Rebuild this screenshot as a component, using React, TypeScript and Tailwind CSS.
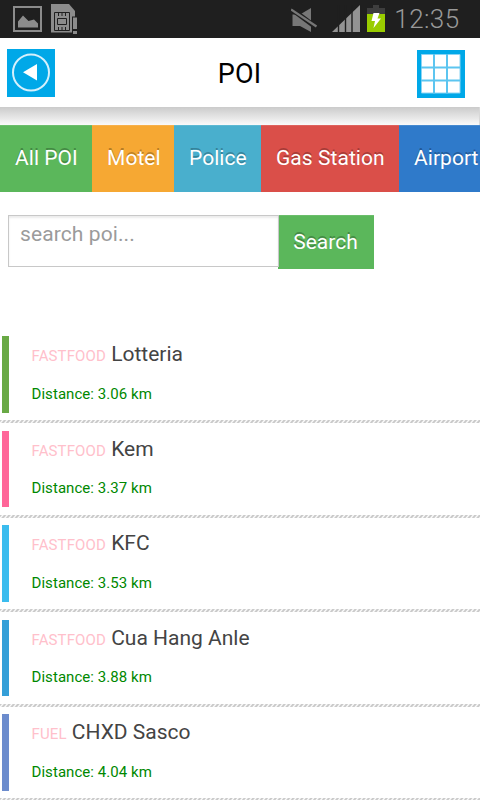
import React, { useState } from 'react'

const categories = [
    { name: 'All POI', style: 'w-[92px] bg-[#5bb75b] border-[#6bbe6b]' },
    { name: 'Motel', style: 'w-[82px] bg-[#f6a833] border-[#f7b04a]' },
    { name: 'Police', style: 'w-[87px] bg-[#49afcd] border-[#5db9d3]' },
    { name: 'Gas Station', style: 'w-[138px] bg-[#da4f49] border-[#de625d]' },
    { name: 'Airport', style: 'w-[96px] bg-[#2f7aca] border-[#468ad0]' },
]

const places = [
    { type: 'FASTFOOD', name: 'Lotteria', distance: '3.06', bar: 'bg-[#69a945]' },
    { type: 'FASTFOOD', name: 'Kem', distance: '3.37', bar: 'bg-[#ff6699]' },
    { type: 'FASTFOOD', name: 'KFC', distance: '3.53', bar: 'bg-[#3bbcee]' },
    { type: 'FASTFOOD', name: 'Cua Hang Anle', distance: '3.88', bar: 'bg-[#349fd8]' },
    { type: 'FUEL', name: 'CHXD Sasco', distance: '4.04', bar: 'bg-[#6c8ccd]' },
]

function StatusBar() {
    return (
        <div className="flex h-[38px] shrink-0 items-start bg-[#1f1f1f]">
            <svg className="ml-[13px] mt-[6px] h-[26px] w-[29px]" viewBox="0 0 29 26" fill="#8c8c8c">
                <rect x="1" y="1" width="27" height="24" fill="none" stroke="#8c8c8c" strokeWidth="2" />
                <path d="M5 21.500V15.500l5-6 5.500 5.500 5.500-1.500 4 4v4z" />
            </svg>
            <svg className="ml-[9px] mt-[4px] h-[30px] w-[27px]" viewBox="0 0 27 30">
                <path d="M0 0h18l6 7v21.500H0z" fill="#8c8c8c" />
                <path d="M21 12.500h6V31h-6z" fill="#1f1f1f" />
                <path d="M22 13.500h4V25h-4zM22 27h4v3h-4z" fill="#8c8c8c" />
                <g fill="none" stroke="#1f1f1f">
                    <path d="M3.500 8.500h15v18h-15zM6.500 14.500h9v6h-9z" />
                    <path d="M7.500 9v3M11 9v3M14.500 9v3M7.500 23v3M11 23v3M14.500 23v3" />
                </g>
            </svg>
            <svg className="ml-auto mt-[8px] h-[24px] w-[27px]" viewBox="0 0 27 24">
                <path d="M1.500 6.500H9L20 0v24L9 18H1.500z" fill="#777" />
                <path d="M0 .5L26 20" stroke="#1f1f1f" strokeWidth="5" />
                <path d="M0 1.500L25.500 18.500" stroke="#777" strokeWidth="2.200" />
            </svg>
            <svg className="ml-[14px] mt-[5px] h-[27px] w-[29px]" viewBox="0 0 29 27">
                <path d="M0 27L28 0v27z" fill="#939393" />
                <path d="M6.500 0v27M13.500 0v27M20 0v27" stroke="#1f1f1f" strokeWidth="1.400" />
            </svg>
            <svg className="ml-[6px] mt-[5px] h-[27px] w-[18px]" viewBox="0 0 18 27">
                <path d="M6 0h6v3h6v6H0V3h6z" fill="#3e3e3e" />
                <path d="M0 9h18v18H0z" fill="#99cc00" />
                <path d="M6.500 8h6L10.500 13.500H14L6.500 23l1.500-7H4.500z" fill="#fff" />
            </svg>
            <span className="ml-[9.500px] mr-[20.500px] mt-[4px] text-[26px] font-light leading-[30px] tracking-[0.4px] text-[#999]">12:35</span>
        </div>
    )
}

function Header() {
    return (
        <div className="flex h-[69px] shrink-0 items-start justify-between bg-white pl-[7px] pr-[15px]">
            <button type="button" className="mt-[11px] h-12 w-12 bg-[#00a8e8]">
                <svg className="h-12 w-12" viewBox="0 0 48 48">
                    <circle cx="24" cy="23.500" r="18" fill="none" stroke="#d5f0fc" strokeWidth="2" />
                    <path d="M16 23.200L30 15v16.500z" fill="#fff" />
                </svg>
            </button>
            <h1 className="mt-5 pl-[7px] text-[27px] leading-8 tracking-[0.2px] text-black">POI</h1>
            <button type="button" className="mt-3 h-12 w-12 bg-[#00a8e8]">
                <svg className="h-12 w-12" viewBox="0 0 48 48">
                    <path d="M4.500 4.500h38.500v38.500H4.500z" fill="#fff" stroke="#8ad4f4" />
                    <path d="M17 4v39.500M30 4v39.500M4 17.500h39.500M4 30.500h39.500" stroke="#5cc5f0" strokeWidth="2" />
                </svg>
            </button>
        </div>
    )
}

function Place({ type, name, distance, bar }: { type: string; name: string; distance: string; bar: string }) {
    return (
        <li>
            <div className="flex py-[7.5px] pl-[2px]">
                <div className={'h-[76.5px] w-[7px] ' + bar}></div>
                <div className="pl-[22.5px] pt-[3px]">
                    <div className="text-[21px] leading-[30px] text-[#444]">
                        <span className="text-[15px] tracking-[0.12px] text-[#ffc0cb]">{type}</span> {name}
                    </div>
                    <div className="mt-[12.5px] text-[15px] leading-5 tracking-[0.06px] text-[#008800]">Distance: {distance} km</div>
                </div>
            </div>
            <div className="h-[3px] bg-[repeating-linear-gradient(130deg,#cacaca_0px,#cacaca_1px,#fafafa_2px,#fafafa_2.4px,#cacaca_3.4px)]"></div>
        </li>
    )
}

export default function App() {
    const [query, setQuery] = useState('')

    return (
        <div className="flex h-[800px] w-[480px] flex-col overflow-hidden bg-white font-[Roboto,sans-serif]">
            <StatusBar />
            <Header />
            <div className="h-[18px] shrink-0 border-r border-[#d8d8d8] bg-linear-to-b from-[#cbcbcb] to-[#fafafa]"></div>

            <div className="flex h-[67px] shrink-0">
                {categories.map((c) => (
                    <button
                        key={c.name}
                        type="button"
                        className={'shrink-0 whitespace-nowrap border-t pl-[15px] text-left text-[21px] tracking-[0.05px] text-white [text-shadow:0_-2px_0_rgba(0,0,0,0.25)] ' + c.style}
                    >
                        {c.name}
                    </button>
                ))}
            </div>

            <div className="mt-[23px] flex h-[54px] shrink-0 pl-2">
                <input
                    className="relative z-10 h-[52px] w-[271px] border border-[#c8c8c8] bg-white pb-[14px] pl-[11px] text-[21px] tracking-[0.1px] text-[#444] shadow-[inset_0_2px_2px_rgba(0,0,0,0.08)] outline-none placeholder:text-[#9b9b9b]"
                    type="text"
                    placeholder="search poi..."
                    value={query}
                    onChange={(e) => setQuery(e.target.value)}
                />
                <button
                    type="button"
                    className="-ml-px w-24 border-t border-[#6bbe6b] bg-[#5bb75b] pr-px text-[21px] text-white [text-shadow:0_-2px_0_rgba(0,0,0,0.25)]"
                >
                    Search
                </button>
            </div>

            <ul className="mt-[59.5px] shrink-0">
                {places.map((p) => (
                    <Place key={p.name} {...p} />
                ))}
            </ul>
        </div>
    )
}
